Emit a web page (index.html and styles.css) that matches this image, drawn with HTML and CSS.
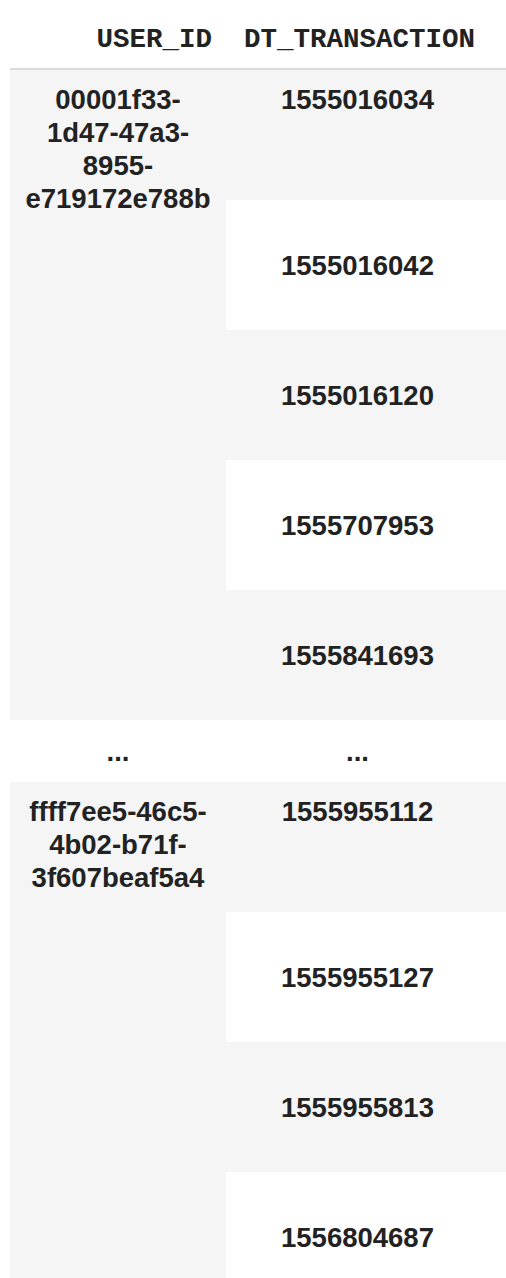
FILE: index.html
```html
<!DOCTYPE html>
<html lang="en">
  <head>
    <meta charset="UTF-8" />
    <meta name="viewport" content="width=device-width, initial-scale=1.0" />
    <title>Document</title>
    <link rel="stylesheet" href="styles.css">
  </head>
  <body>
    <table class="dataframe">
      <thead>
        <tr>
          <th class="col-id">USER_ID</th>
          <th class="col-dt">DT_TRANSACTION</th>
        </tr>
      </thead>
      <tbody>
        <tr class="odd first">
          <th class="uid" rowspan="5">00001f33-<br />1d47-47a3-<br />8955-<br />e719172e788b</th>
          <td>1555016034</td>
        </tr>
        <tr>
          <td>1555016042</td>
        </tr>
        <tr class="odd">
          <td>1555016120</td>
        </tr>
        <tr>
          <td>1555707953</td>
        </tr>
        <tr class="odd">
          <td>1555841693</td>
        </tr>
        <!-- 省略行 -->
        <tr class="gap">
          <th>...</th>
          <td>...</td>
        </tr>
        <tr class="odd first">
          <th class="uid" rowspan="4">ffff7ee5-46c5-<br />4b02-b71f-<br />3f607beaf5a4</th>
          <td>1555955112</td>
        </tr>
        <tr>
          <td>1555955127</td>
        </tr>
        <tr class="odd">
          <td>1555955813</td>
        </tr>
        <tr>
          <td>1556804687</td>
        </tr>
      </tbody>
    </table>
  </body>
</html>
```

FILE: styles.css
```css
body {
  margin: 0;
  background-color: white;
}
.dataframe {
  margin-left: 10px;
  width: 496px;
  border-collapse: separate;
  border-spacing: 0;
  font-family: "Liberation Sans", Arial, sans-serif;
  font-size: 27.5px;
  font-weight: bold;
  line-height: 33px;
  color: #222;
}
.dataframe thead th {
  font-family: "Liberation Mono", "Courier New", monospace;
  text-align: right;
  vertical-align: bottom;
  padding: 23px 14px 12px 14px;
  border-bottom: 2px solid #dcdcdc;
}
.col-id {
  width: 188px;
}
.dataframe thead .col-dt {
  padding-right: 31px;
}
.dataframe tbody tr {
  height: 130px;
}
.dataframe tbody tr.gap {
  height: 62px;
}
.dataframe tbody th,
.dataframe tbody td {
  text-align: center;
  vertical-align: middle;
  padding: 0 14px;
}
.dataframe tbody td {
  padding-right: 31px;
}
/* 斑马纹 */
.dataframe tbody tr.odd td,
.dataframe tbody th.uid {
  background-color: #f5f5f5;
}
.dataframe tbody th.uid,
.dataframe tbody tr.first td {
  vertical-align: top;
  padding-top: 13px;
}
```
